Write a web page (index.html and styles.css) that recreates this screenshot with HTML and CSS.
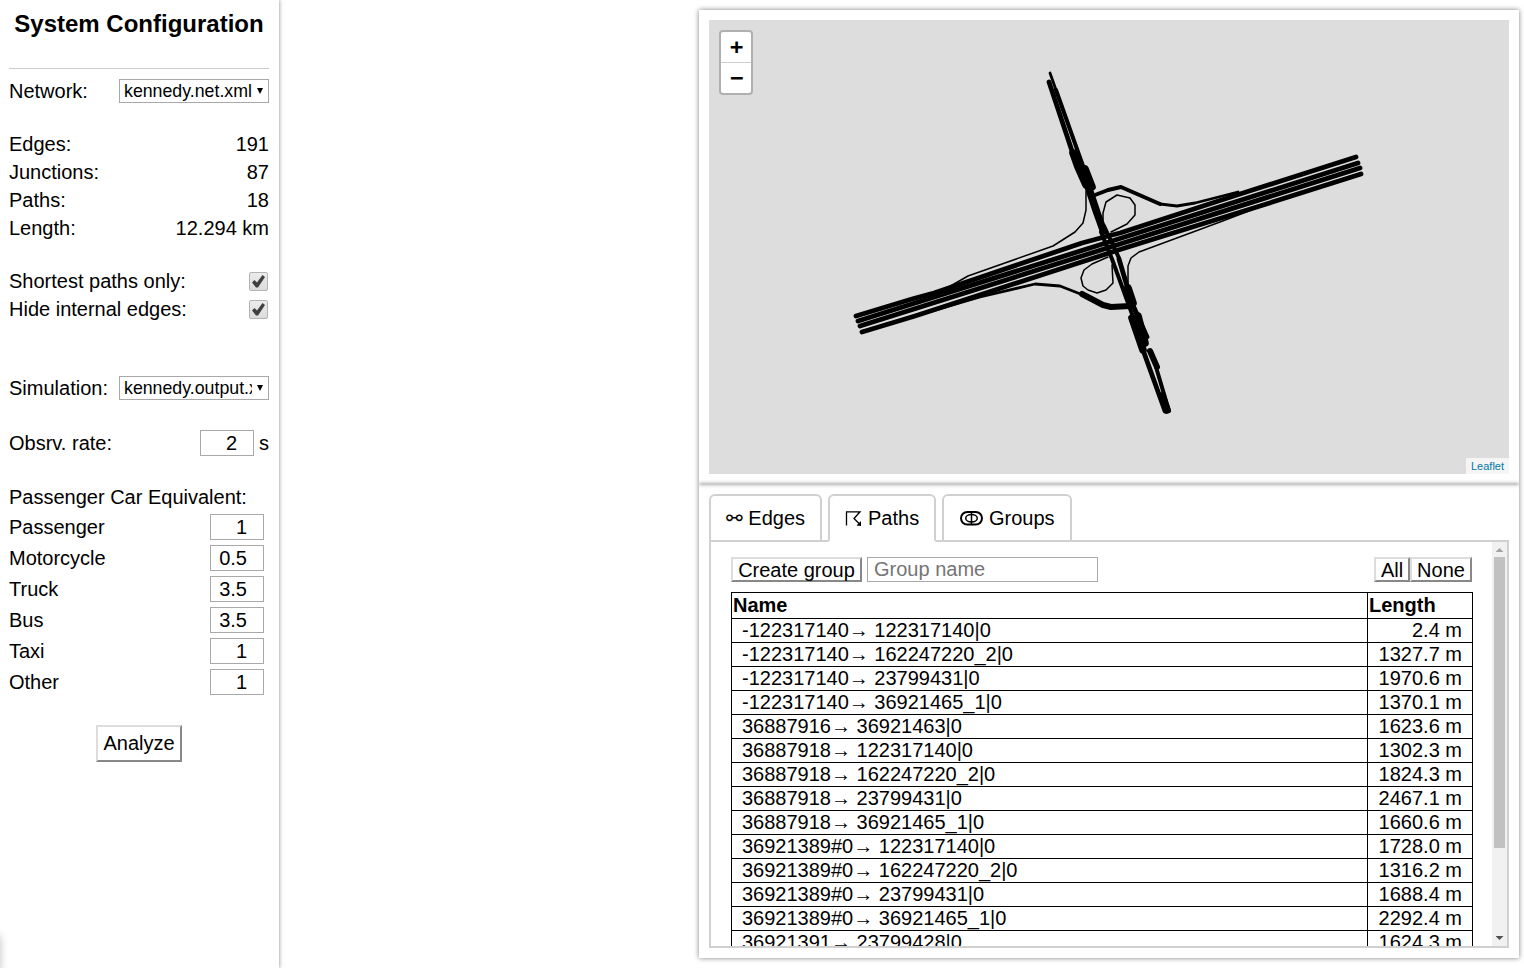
FILE: index.html
```
<!DOCTYPE html>
<html lang="en">
<head>
<meta charset="utf-8">
<title>System Configuration</title>
<link rel="stylesheet" href="styles.css">
</head>
<body>
<aside class="sidebar">
  <h1 class="title">System Configuration</h1>
  <section class="block network">
    <div class="row"><span>Network:</span><div class="select"><span class="select-text">kennedy.net.xml</span><i class="caret"></i></div></div>
  </section>
  <section class="block stats">
    <div class="row"><span>Edges:</span><span>191</span></div>
    <div class="row"><span>Junctions:</span><span>87</span></div>
    <div class="row"><span>Paths:</span><span>18</span></div>
    <div class="row"><span>Length:</span><span>12.294 km</span></div>
  </section>
  <section class="block options">
    <div class="row"><span>Shortest paths only:</span><span class="check"><svg viewBox="0 0 17 17"><path d="M2 9.500 4.500 7l2.500 2.500L12.500 2l2.500 2L8 14.500H6z"/></svg></span></div>
    <div class="row"><span>Hide internal edges:</span><span class="check"><svg viewBox="0 0 17 17"><path d="M2 9.500 4.500 7l2.500 2.500L12.500 2l2.500 2L8 14.500H6z"/></svg></span></div>
  </section>
  <section class="block simulation">
    <div class="row"><span>Simulation:</span><div class="select"><span class="select-text">kennedy.output.xml</span><i class="caret"></i></div></div>
  </section>
  <section class="block rate">
    <div class="row"><span>Obsrv. rate:</span><span class="unit"><span class="num">2</span>s</span></div>
  </section>
  <section class="pce">
    <div class="row">Passenger Car Equivalent:</div>
    <div class="pce-row"><span>Passenger</span><span class="num">1</span></div>
    <div class="pce-row"><span>Motorcycle</span><span class="num">0.5</span></div>
    <div class="pce-row"><span>Truck</span><span class="num">3.5</span></div>
    <div class="pce-row"><span>Bus</span><span class="num">3.5</span></div>
    <div class="pce-row"><span>Taxi</span><span class="num">1</span></div>
    <div class="pce-row"><span>Other</span><span class="num">1</span></div>
  </section>
  <button class="button analyze">Analyze</button>
</aside>
<div class="corner-shadow"></div>
<main class="panel">
  <section class="card map-card">
    <div class="map">
      <svg class="roads" viewBox="709 20 800 454">
        <g class="w5">
          <path d="M856 316 912 299 934 293 1082 243 1108 236 1120 233 1240 194 1356 157"/>
          <path d="M858 321 1120 238.500 1358 163"/>
          <path d="M860 326 1120 244 1360 168"/>
          <path d="M862 332 915 316 1120 249.500 1260 206 1361 174"/>
          <path d="M1049 82 1072 151"/>
          <path d="M1119 259 1132 303 1147 337"/>
          <path d="M1143 350 1165 411"/>
          <path d="M1082 178 1092 196"/>
        </g>
        <g class="w4">
          <path d="M1056 90 1083 166"/>
          <path d="M1104 226 1119 258"/>
          <path d="M1101 232 1112 259 1132 314"/>
          <path d="M1156 367 1169 411"/>
          <path d="M1095 195 1108 190 1121 187 1160 204"/>
        </g>
        <g class="w3">
          <path d="M1050 73 1083 166"/>
          <path d="M1160 204 1177 206 1195 203 1238 192"/>
          <path d="M915 316 980 297 1035 284 1060 286 1083 295"/>
        </g>
        <g class="w6">
          <path d="M1082 294 1103 305 1111 307 1130 306"/>
          <path d="M1150 351 1157 367"/>
        </g>
        <g class="w8">
          <path d="M1073 153 1078 167 1086 185"/>
          <path d="M1085 169 1092 187"/>
          <path d="M1090 192 1097 213 1103.500 231"/>
          <path d="M1132 318 1143 350"/><path d="M1138 316 1145 343"/>
          <path d="M1162 396 1167 410"/><path d="M1128 288 1133 303"/>
        </g>
        <g class="w1">
          <path d="M940 292 968 276 1053 246 1075 232 1083 223 1086 210 1086 183"/>
          <path d="M1103 232 1103 213 1106 202 1117 195 1130 198 1135 205 1135 215 1127 224 1111 232"/>
          <path d="M1108 257 1092 264 1084 270 1081 278 1083 286 1088 290 1097 293 1106 290 1113 283 1112 265"/>
          <path d="M1128 292 1128 266 1131 258 1139 252 1220 222 1262 206"/>
        </g>
      </svg>
      <div class="zoom"><span class="zoom-btn">+</span><span class="zoom-btn">−</span></div>
      <a class="credit">Leaflet</a>
    </div>
  </section>
  <section class="card list-card">
    <nav class="tabs">
      <div class="tab edges">⚯ Edges</div>
      <div class="tab active paths"><svg class="icon path-icon" viewBox="0 0 17 16"><path d="M1.500 15.500V1.800H15L9 8.500l5.500 5.500"/><path class="head" d="M16 16V11l-4.500 4.500z"/></svg>Paths</div>
      <div class="tab groups"><svg class="icon group-icon" viewBox="0 0 24 16"><rect x="2" y="2" width="21" height="12.500" rx="6.200"/><ellipse class="thin" cx="12.500" cy="8.200" rx="5.800" ry="3.700"/><path class="thin" d="M12.500 2v12.500"/></svg>Groups</div>
    </nav>
    <div class="content">
      <div class="scroll-area">
        <div class="toolbar">
          <button class="button create">Create group</button>
          <div class="name-input">Group name</div>
          <div class="picks"><button class="button all">All</button><button class="button none">None</button></div>
        </div>
        <table class="paths-table">
          <thead><tr><th>Name</th><th class="len">Length</th></tr></thead>
          <tbody>
            <tr><td>-122317140→ 122317140|0</td><td>2.4 m</td></tr>
            <tr><td>-122317140→ 162247220_2|0</td><td>1327.7 m</td></tr>
            <tr><td>-122317140→ 23799431|0</td><td>1970.6 m</td></tr>
            <tr><td>-122317140→ 36921465_1|0</td><td>1370.1 m</td></tr>
            <tr><td>36887916→ 36921463|0</td><td>1623.6 m</td></tr>
            <tr><td>36887918→ 122317140|0</td><td>1302.3 m</td></tr>
            <tr><td>36887918→ 162247220_2|0</td><td>1824.3 m</td></tr>
            <tr><td>36887918→ 23799431|0</td><td>2467.1 m</td></tr>
            <tr><td>36887918→ 36921465_1|0</td><td>1660.6 m</td></tr>
            <tr><td>36921389#0→ 122317140|0</td><td>1728.0 m</td></tr>
            <tr><td>36921389#0→ 162247220_2|0</td><td>1316.2 m</td></tr>
            <tr><td>36921389#0→ 23799431|0</td><td>1688.4 m</td></tr>
            <tr><td>36921389#0→ 36921465_1|0</td><td>2292.4 m</td></tr>
            <tr><td>36921391→ 23799428|0</td><td>1624.3 m</td></tr>
          </tbody>
        </table>
      </div>
      <div class="scrollbar"><i class="arrow up"></i><i class="thumb"></i><i class="arrow down"></i></div>
    </div>
  </section>
</main>
</body>
</html>
```
FILE: styles.css
```
* { box-sizing: border-box; }
body {
  margin: 0;
  height: 968px;
  overflow: hidden;
  display: flex;
  justify-content: space-between;
  background: #fff;
  color: #000;
  font: 20px/28px "Liberation Sans", "DejaVu Sans", sans-serif;
}
.sidebar {
  width: 279px;
  height: 968px;
  padding: 0 10px 0 9px;
  box-shadow: 0 0 4px rgba(0, 0, 0, .5);
}
.title {
  height: 69px;
  margin: 0 0 8px;
  padding-top: 10px;
  border-bottom: 1px solid #ccc;
  font-size: 24px;
  text-align: center;
  white-space: nowrap;
}
.row, .pce-row { display: flex; justify-content: space-between; align-items: center; height: 28px; }
.network { margin-bottom: 25px; }
.stats { margin-bottom: 25px; }
.options { margin-bottom: 51px; }
.simulation { margin-bottom: 27px; }
.rate { margin-bottom: 26px; }
.select {
  display: flex;
  width: 150px;
  height: 24px;
  padding-left: 4px;
  border: 1px solid #a9a9a9;
  font-size: 17.75px;
  line-height: 22px;
}
.select-text { width: 128px; overflow: hidden; white-space: nowrap; }
.caret { margin: 8px 0 0 5px; width: 6px; height: 6px; background: #000; clip-path: polygon(0 0, 100% 0, 50% 100%); }
.check {
  width: 19px;
  height: 19px;
  margin: 1px 1px 0 0;
  border: 1px solid #b4b4b4;
  border-radius: 2px;
  background: linear-gradient(#ececec, #dcdcdc);
}
.check svg { display: block; width: 17px; height: 17px; fill: #404040; }
.unit { display: flex; gap: 5px; }
.num {
  width: 54px;
  height: 26px;
  padding-right: 16px;
  border: 1px solid #a9a9a9;
  line-height: 25px;
  text-align: right;
}
.unit .num { margin-top: 1px; }
.pce-row { height: 31px; padding-right: 5px; }
.button {
  padding: 0;
  border: 2px solid;
  border-color: #ddd #888 #888 #ddd;
  background: #fff;
  color: #000;
  font: inherit;
  line-height: 22px;
}
.analyze { display: block; width: 86px; height: 37px; margin: 28px auto 0 87px; padding-bottom: 2px; }
.corner-shadow { position: absolute; left: -20px; top: 936px; width: 20px; height: 36px; box-shadow: 0 0 8px rgba(0, 0, 0, .25); }
.panel { width: 820px; height: 948px; margin: 10px 5px 0 0; box-shadow: 0 0 5px rgba(0, 0, 0, .5); }
.card { height: 474px; padding: 10px; }
.map-card { box-shadow: 0 0 4px rgba(0, 0, 0, .5); clip-path: inset(0 0 -6px 0); }
.list-card { box-shadow: 0 0 4px rgba(0, 0, 0, .5); clip-path: inset(-6px 0 0 0); }
.map { position: relative; width: 800px; height: 454px; background: #ddd; }
.roads { display: block; width: 800px; height: 454px; fill: none; stroke: #000; stroke-linecap: round; stroke-linejoin: round; }
.w1 { stroke-width: 1.5; }
.w3 { stroke-width: 2.8; }
.w4 { stroke-width: 4; }
.w5 { stroke-width: 4.8; }
.w6 { stroke-width: 6; }
.w8 { stroke-width: 7.6; }
.zoom {
  position: absolute;
  left: 10px;
  top: 10px;
  width: 34px;
  height: 65px;
  border: 2px solid rgba(0, 0, 0, .2);
  border-radius: 4px;
  background: #fff;
  background-clip: padding-box;
}
.zoom-btn { display: block; height: 30px; padding-left: 1px; font: bold 22px/30px "DejaVu Sans Mono", monospace; text-align: center; }
.zoom-btn:first-child { height: 31px; border-bottom: 1px solid #ccc; }
.credit {
  position: absolute;
  right: 0;
  bottom: 0;
  width: 43px;
  height: 16px;
  padding-left: 5px;
  background: rgba(255, 255, 255, .7);
  color: #0078a8;
  font-size: 11px;
  line-height: 16px;
}
.tabs { display: flex; gap: 6px; height: 48px; margin-bottom: -2px; position: relative; }
.tab {
  height: 48px;
  padding-left: 15px;
  border: 2px solid #d0d0d0;
  border-radius: 6px 6px 0 0;
  line-height: 45px;
  white-space: nowrap;
}
.edges { width: 113px; }
.paths { display: flex; width: 108px; }
.groups { display: flex; width: 130px; }
.active { border-bottom-color: #fff; background: #fff; }
.icon { height: 16px; margin-top: 14px; fill: none; stroke: #000; stroke-width: 1.3; }
.path-icon { width: 17px; margin-right: 6px; }
.path-icon .head { fill: #000; stroke: none; }
.group-icon { width: 24px; margin-right: 6px; stroke-width: 2; }
.group-icon .thin { stroke-width: 1.5; }
.content { display: flex; width: 800px; height: 408px; border: 2px solid #d0d0d0; }
.scroll-area { flex: 1; height: 404px; padding: 15px 19px 0 20px; overflow: hidden; }
.toolbar { display: flex; height: 25px; margin-bottom: 10px; }
.create { width: 131px; margin-right: 5px; }
.name-input { width: 231px; height: 25px; padding-left: 6px; border: 1px solid #a9a9a9; color: #757575; line-height: 23px; }
.picks { display: flex; margin: 0 1px 0 auto; }
.all { width: 36px; }
.none { width: 62px; }
.paths-table { width: 742px; border-collapse: collapse; table-layout: fixed; line-height: 23px; }
.paths-table th, .paths-table td { height: 24px; padding: 0 10px; border: 1px solid #000; text-align: left; white-space: nowrap; }
.paths-table th { height: 26px; padding: 0 1px; line-height: 25px; }
.paths-table td:last-child { text-align: right; }
.paths-table .len { width: 105px; }
.scrollbar { display: flex; flex-direction: column; align-items: center; width: 15px; background: #f1f1f1; }
.thumb { width: 11px; height: 291px; background: #c1c1c1; }
.arrow { width: 8px; height: 4px; }
.up { margin: 6px 0 5px; background: #a3a3a3; clip-path: polygon(50% 0, 100% 100%, 0 100%); }
.down { margin: auto 0 6px; background: #505050; clip-path: polygon(0 0, 100% 0, 50% 100%); }
```
